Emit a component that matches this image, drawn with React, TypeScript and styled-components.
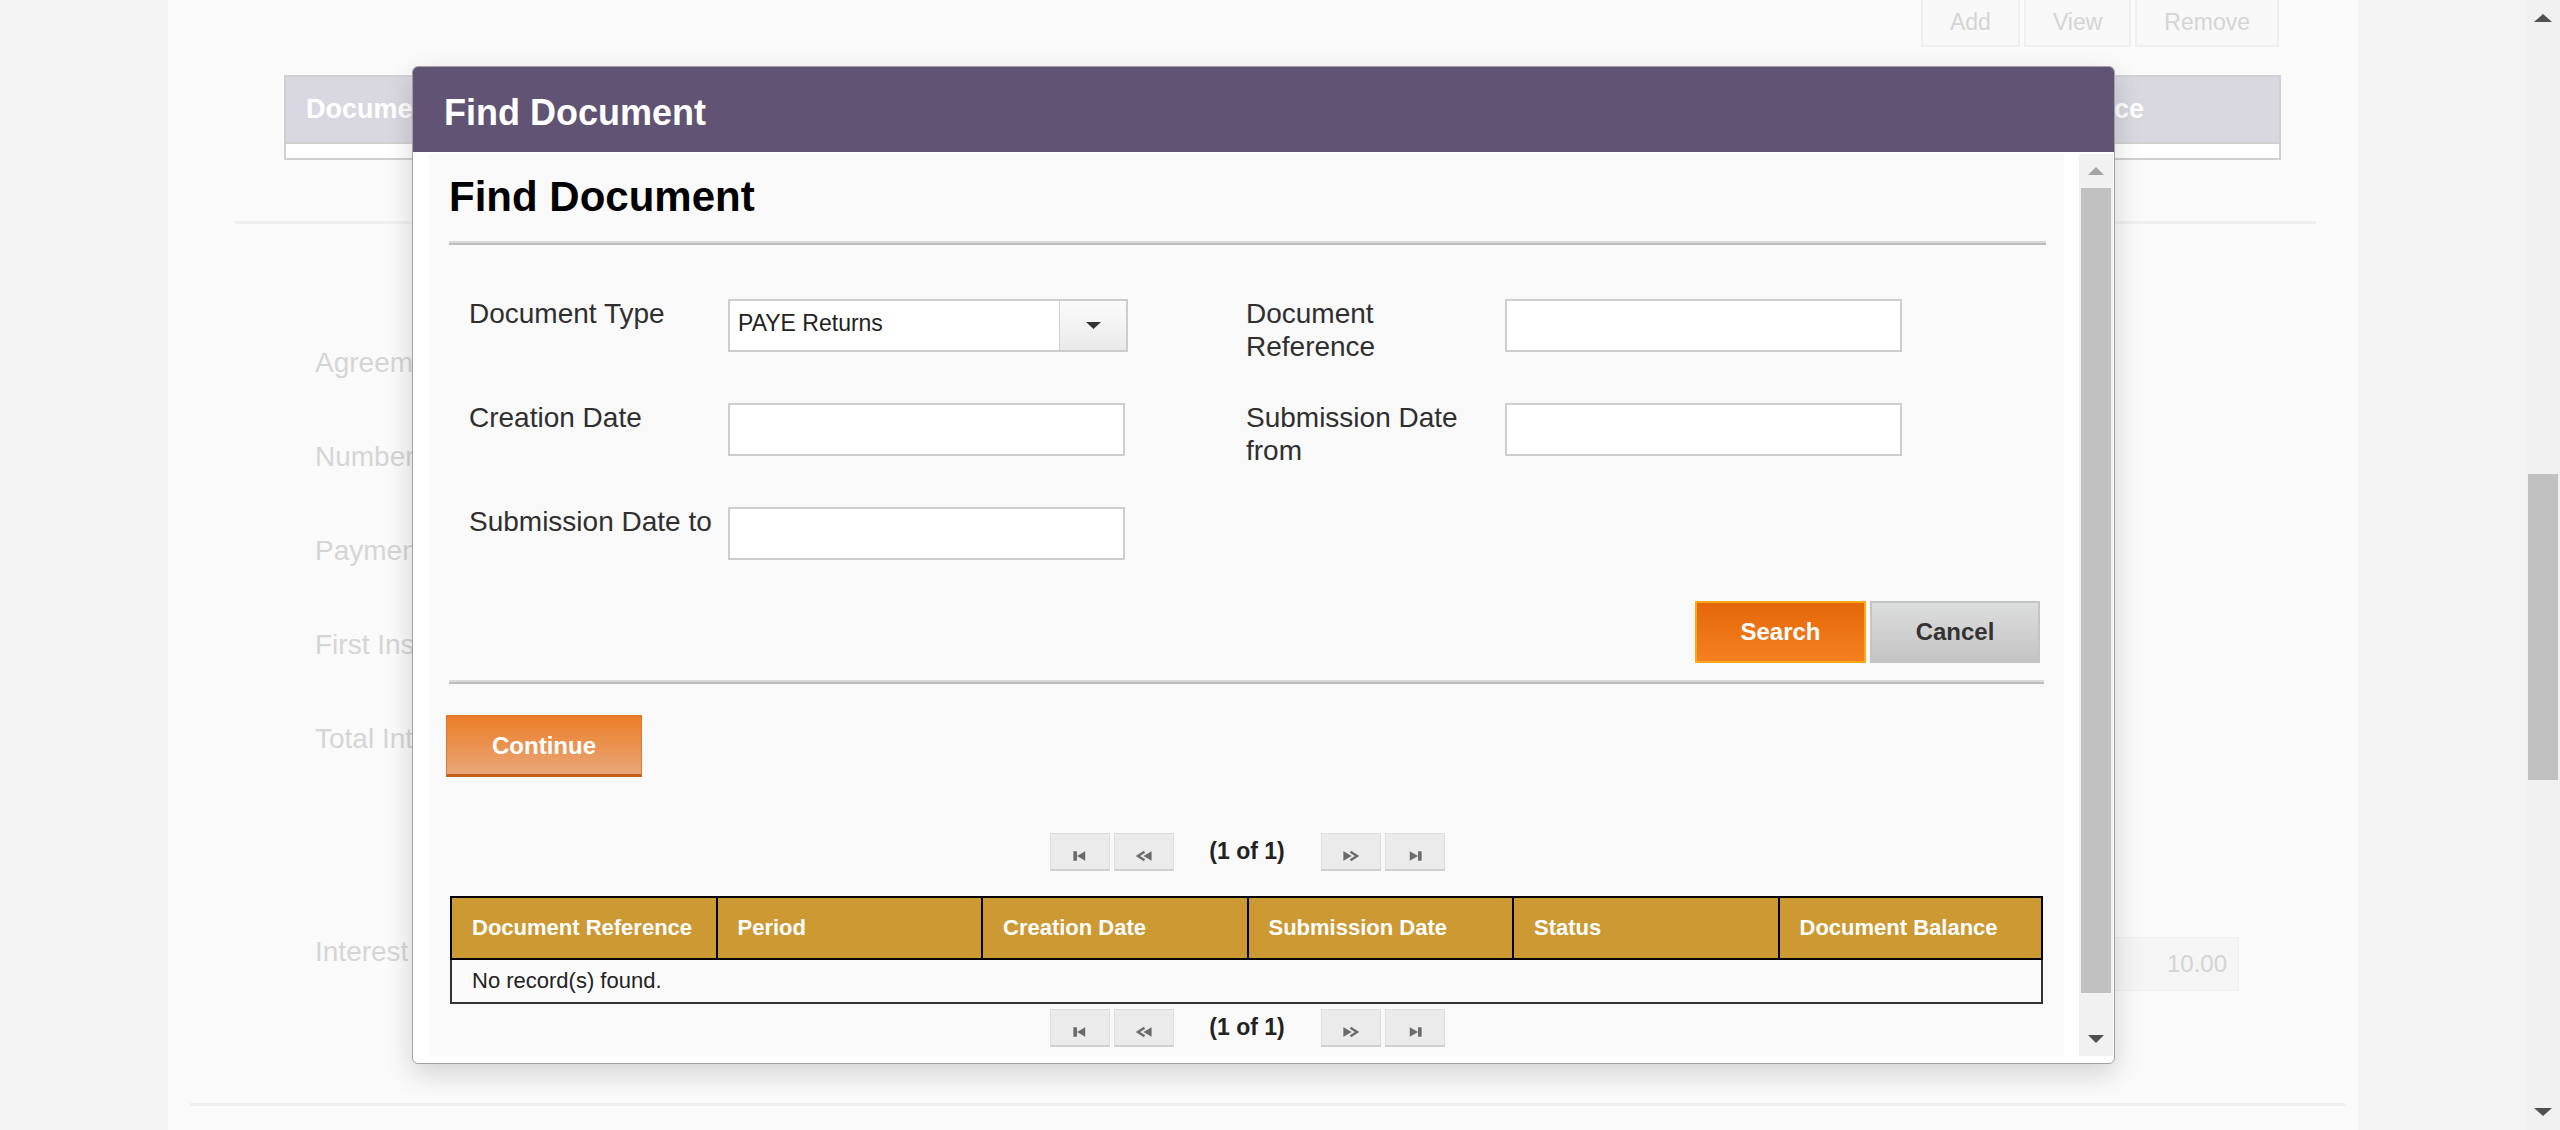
import React from "react";
import styled, { createGlobalStyle } from "styled-components";

const FONT = `"Liberation Sans", Arial, Helvetica, sans-serif`;

const GlobalStyle = createGlobalStyle`
  html, body { margin: 0; padding: 0; overflow: hidden; }
  body { font-family: ${FONT}; background: #f4f4f4; }
  * { box-sizing: border-box; }
`;

const Page = styled.div`
  position: relative;
  display: flex;
  width: 2560px;
  height: 1130px;
  overflow: hidden;
`;

const Gutter = styled.div`
  width: 168px;
  flex: none;
  background: #f4f4f4;
`;

const Main = styled.main`
  width: 2190px;
  flex: none;
  background: #fafafa;
  display: flex;
  flex-direction: column;
`;

/* ---------- faded page behind the dialog ---------- */

const Toolbar = styled.div`
  display: flex;
  justify-content: flex-end;
  gap: 4px;
  padding-right: 79px;
  height: 47px;
`;

const ToolButton = styled.div`
  height: 47px;
  padding: 0 27px;
  border: 2px solid #efefef;
  border-top: none;
  background: #f8f8f8;
  color: #d4d4d4;
  font-size: 23px;
  display: flex;
  align-items: center;
`;

const BgTable = styled.div`
  margin: 28px 77px 0 116px;
  border: 2px solid #d0d0d0;
  background: #fff;
`;

const BgHeader = styled.div`
  display: grid;
  grid-template-columns: repeat(5, 319px) 1fr;
  height: 67px;
  background: #d9d7df;
  border-bottom: 2px solid #d0d0d0;
`;

const BgHeaderCell = styled.div`
  display: flex;
  align-items: center;
  padding-left: 20px;
  color: #fff;
  font-weight: bold;
  font-size: 27px;
  white-space: nowrap;
  overflow: hidden;
`;

const BgRow = styled.div`
  height: 14px;
`;

const FaintRule = styled.div<{ $top: number; $left: number; $right: number }>`
  height: 3px;
  background: #efefef;
  margin: ${(p) => `${p.$top}px ${p.$right}px 0 ${p.$left}px`};
`;

const BgForm = styled.div`
  margin-top: 92px;
  display: flex;
  flex-direction: column;
`;

const BgFormRow = styled.div<{ $h: number }>`
  height: ${(p) => p.$h}px;
  display: flex;
  align-items: flex-start;
  padding: 0 119px 0 147px;
`;

const BgLabel = styled.div`
  font-size: 28px;
  line-height: 94px;
  color: #d5d5d5;
  white-space: nowrap;
`;

const BgValue = styled.div`
  margin-left: auto;
  margin-top: 32px;
  width: 250px;
  height: 54px;
  background: #f5f5f5;
  border: 1px solid #efefef;
  color: #d3d3d3;
  font-size: 24px;
  line-height: 52px;
  text-align: right;
  padding-right: 11px;
`;

/* ---------- scrollbars ---------- */

const ScrollBar = styled.div<{ $w: number }>`
  width: ${(p) => p.$w}px;
  flex: none;
  background: #f1f1f1;
  display: flex;
  flex-direction: column;
`;

const ScrollButton = styled.div<{ $h: number }>`
  height: ${(p) => p.$h}px;
  flex: none;
  display: flex;
  align-items: center;
  justify-content: center;
`;

const ScrollTrack = styled.div<{ $pad: number }>`
  flex: 1;
  padding-top: ${(p) => p.$pad}px;
`;

const ScrollThumb = styled.div<{ $h: number }>`
  height: ${(p) => p.$h}px;
  margin: 0 2px;
  background: #c1c1c1;
`;

const Arrow = ({ dir, color, w = 16, h = 8 }: { dir: "up" | "down"; color: string; w?: number; h?: number }) => (
  <svg width={w} height={h} viewBox={`0 0 ${w} ${h}`}>
    <polygon
      points={dir === "up" ? `0,${h} ${w / 2},0 ${w},${h}` : `0,0 ${w},0 ${w / 2},${h}`}
      fill={color}
    />
  </svg>
);

/* ---------- dialog ---------- */

const Modal = styled.section`
  position: absolute;
  left: 412px;
  top: 66px;
  width: 1703px;
  height: 998px;
  border: 1px solid #a2a2a2;
  border-radius: 6px;
  background: #fff;
  overflow: hidden;
  display: flex;
  flex-direction: column;
  box-shadow: 0 10px 28px rgba(0, 0, 0, 0.16);
`;

const TitleBar = styled.header`
  height: 85px;
  flex: none;
  background: #615374;
  color: #fff;
  font-weight: bold;
  font-size: 36px;
  line-height: 41px;
  display: flex;
  align-items: center;
  padding: 6px 0 0 31px;
`;

const ModalBody = styled.div`
  flex: 1;
  min-height: 0;
  display: flex;
  gap: 15px;
  padding: 2px 1px 7px 16px;
`;

const Pane = styled.div`
  flex: 1;
  min-width: 0;
  background: #f9f9f9;
  overflow: hidden;
  padding: 19px 18px 0 20px;
  display: flex;
  flex-direction: column;
`;

const Heading = styled.h2`
  margin: 0;
  font-size: 42px;
  line-height: 48px;
  font-weight: bold;
  color: #000;
`;

const Rule = styled.div<{ $top: number; $right?: number }>`
  height: 4px;
  flex: none;
  margin-top: ${(p) => p.$top}px;
  margin-right: ${(p) => p.$right ?? 0}px;
  background: linear-gradient(#d9d9d9 50%, #bdbdbd 50%);
`;

const FormGrid = styled.div`
  display: grid;
  grid-template-columns: 259px 518px 259px 397px;
  grid-auto-rows: 53px;
  row-gap: 51px;
  margin-top: 54px;
  padding-left: 20px;
  align-items: start;
`;

const Label = styled.label`
  font-size: 28px;
  line-height: 33px;
  color: #2f2f2f;
  margin-top: -2px;
  padding-right: 8px;
`;

const TextInput = styled.input`
  width: 397px;
  height: 53px;
  border: 2px solid #cdcdcd;
  background: #fff;
  outline: none;
  font-family: ${FONT};
  font-size: 23px;
  padding: 0 8px;
`;

const SelectBox = styled.div`
  width: 400px;
  height: 53px;
  border: 2px solid #cdcdcd;
  background: #fff;
  display: flex;
`;

const SelectValue = styled.div`
  flex: 1;
  padding-left: 8px;
  font-size: 23px;
  line-height: 45px;
  color: #222;
`;

const SelectTrigger = styled.div`
  width: 67px;
  border-left: 1px solid #d3d3d3;
  background: linear-gradient(#fbfbfb, #eaeaea);
  display: flex;
  align-items: center;
  justify-content: center;
`;

const ActionRow = styled.div`
  display: flex;
  justify-content: flex-end;
  gap: 4px;
  margin-top: 41px;
  padding-right: 6px;
`;

const ActionButton = styled.button<{ $primary?: boolean; $w: number }>`
  width: ${(p) => p.$w}px;
  height: 62px;
  font-family: ${FONT};
  font-weight: bold;
  font-size: 24px;
  cursor: pointer;
  border: 2px solid ${(p) => (p.$primary ? "#fba71b" : "#c4c4c4")};
  color: ${(p) => (p.$primary ? "#fff" : "#333")};
  background: ${(p) =>
    p.$primary ? "linear-gradient(#e4680a, #f58020)" : "linear-gradient(#dcdddd, #c5c4c4)"};
`;

const ContinueButton = styled.button`
  align-self: flex-start;
  margin: 31px 0 0 -3px;
  width: 196px;
  height: 62px;
  font-family: ${FONT};
  font-weight: bold;
  font-size: 24px;
  color: #fff;
  border: 1px solid #dc772e;
  border-bottom: 3px solid #bf5f18;
  background: linear-gradient(#ec7d27, #e9a778);
  padding-top: 2px;
`;

const Pager = styled.div<{ $top: number }>`
  display: flex;
  justify-content: center;
  align-items: center;
  margin-top: ${(p) => p.$top}px;
  height: 38px;
  flex: none;
`;

const PagerGroup = styled.div`
  display: flex;
  gap: 4px;
`;

const PagerButton = styled.div`
  width: 60px;
  height: 38px;
  background: #ebebeb;
  border: 1px solid #dedede;
  border-bottom: 2px solid #cfcfcf;
  display: flex;
  align-items: center;
  justify-content: center;
  padding-top: 8px;
`;

const PagerInfo = styled.div`
  padding: 0 36px 2px 35px;
  font-weight: bold;
  font-size: 23px;
  color: #222;
`;

const DataTable = styled.table`
  width: 1593px;
  margin: 25px 3px 0 1px;
  border-collapse: separate;
  border-spacing: 0;
  table-layout: fixed;
  flex: none;
`;

const Th = styled.th`
  height: 64px;
  padding: 0 0 0 20px;
  background: #cc9933;
  color: #fff;
  font-weight: bold;
  font-size: 22px;
  text-align: left;
  white-space: nowrap;
  border-top: 2px solid #000;
  border-bottom: 2px solid #000;
  border-left: 2px solid #000;
  &:last-child {
    border-right: 2px solid #000;
  }
`;

const Td = styled.td`
  height: 44px;
  padding: 0 0 0 20px;
  background: #fbfbfb;
  color: #222;
  font-size: 22px;
  border: 2px solid #333;
  border-top: none;
`;

const PagerIcon = ({ kind }: { kind: "first" | "prev" | "next" | "last" }) => {
  const c = "#6b6b6b";
  const shapes: Record<string, React.ReactNode> = {
    first: (
      <>
        <rect x="2" y="1" width="3" height="8" fill={c} />
        <polygon points="5,5 12,1 12,9" fill={c} />
      </>
    ),
    prev: (
      <>
        <polyline points="8,1.5 2.5,5 8,8.5" fill="none" stroke={c} strokeWidth="2" />
        <polygon points="7,5 14,1 14,9" fill={c} />
      </>
    ),
    next: (
      <>
        <polygon points="2,1 9,5 2,9" fill={c} />
        <polyline points="8,1.5 13.5,5 8,8.5" fill="none" stroke={c} strokeWidth="2" />
      </>
    ),
    last: (
      <>
        <polygon points="4,1 11,5 4,9" fill={c} />
        <rect x="11" y="1" width="3" height="8" fill={c} />
      </>
    ),
  };
  return (
    <svg width="19" height="12" viewBox="0 0 16 10">
      {shapes[kind]}
    </svg>
  );
};

const Paginator = ({ top }: { top: number }) => (
  <Pager $top={top}>
    <PagerGroup>
      <PagerButton>
        <PagerIcon kind="first" />
      </PagerButton>
      <PagerButton>
        <PagerIcon kind="prev" />
      </PagerButton>
    </PagerGroup>
    <PagerInfo>(1 of 1)</PagerInfo>
    <PagerGroup>
      <PagerButton>
        <PagerIcon kind="next" />
      </PagerButton>
      <PagerButton>
        <PagerIcon kind="last" />
      </PagerButton>
    </PagerGroup>
  </Pager>
);

const bgRows: { label: string; h: number }[] = [
  { label: "Agreement Date", h: 94 },
  { label: "Number of Installments", h: 94 },
  { label: "Payment Frequency", h: 94 },
  { label: "First Installment Date", h: 94 },
  { label: "Total Interest Amount", h: 213 },
];

const columns = [
  "Document Reference",
  "Period",
  "Creation Date",
  "Submission Date",
  "Status",
  "Document Balance",
];

export default function App() {
  return (
    <>
      <GlobalStyle />
      <Page>
        <Gutter />
        <Main>
          <Toolbar>
            <ToolButton>Add</ToolButton>
            <ToolButton>View</ToolButton>
            <ToolButton>Remove</ToolButton>
          </Toolbar>
          <BgTable>
            <BgHeader>
              {columns.map((c) => (
                <BgHeaderCell key={c}>{c}</BgHeaderCell>
              ))}
            </BgHeader>
            <BgRow />
          </BgTable>
          <FaintRule $top={61} $left={66} $right={42} />
          <BgForm>
            {bgRows.map((r) => (
              <BgFormRow key={r.label} $h={r.h}>
                <BgLabel>{r.label}</BgLabel>
              </BgFormRow>
            ))}
            <BgFormRow $h={94}>
              <BgLabel>Interest Amount</BgLabel>
              <BgValue>10.00</BgValue>
            </BgFormRow>
          </BgForm>
          <FaintRule $top={104} $left={22} $right={13} />
        </Main>
        <Gutter />
        <ScrollBar $w={34}>
          <ScrollButton $h={36}>
            <Arrow dir="up" color="#505050" w={18} h={8} />
          </ScrollButton>
          <ScrollTrack $pad={438}>
            <ScrollThumb $h={306} />
          </ScrollTrack>
          <ScrollButton $h={36}>
            <Arrow dir="down" color="#505050" w={18} h={8} />
          </ScrollButton>
        </ScrollBar>

        <Modal role="dialog" aria-label="Find Document">
          <TitleBar>Find Document</TitleBar>
          <ModalBody>
            <Pane>
              <Heading>Find Document</Heading>
              <Rule $top={20} />
              <FormGrid>
                <Label>Document Type</Label>
                <SelectBox>
                  <SelectValue>PAYE Returns</SelectValue>
                  <SelectTrigger>
                    <Arrow dir="down" color="#333" w={15} h={7} />
                  </SelectTrigger>
                </SelectBox>
                <Label>Document Reference</Label>
                <TextInput type="text" />

                <Label>Creation Date</Label>
                <TextInput type="text" />
                <Label>Submission Date from</Label>
                <TextInput type="text" />

                <Label>Submission Date to</Label>
                <TextInput type="text" />
              </FormGrid>
              <ActionRow>
                <ActionButton $primary $w={171}>
                  Search
                </ActionButton>
                <ActionButton $w={170}>Cancel</ActionButton>
              </ActionRow>
              <Rule $top={17} $right={2} />
              <ContinueButton>Continue</ContinueButton>
              <Paginator top={56} />
              <DataTable>
                <thead>
                  <tr>
                    {columns.map((c) => (
                      <Th key={c}>{c}</Th>
                    ))}
                  </tr>
                </thead>
                <tbody>
                  <tr>
                    <Td colSpan={6}>No record(s) found.</Td>
                  </tr>
                </tbody>
              </DataTable>
              <Paginator top={5} />
            </Pane>
            <ScrollBar $w={34}>
              <ScrollButton $h={34}>
                <Arrow dir="up" color="#a3a3a3" />
              </ScrollButton>
              <ScrollTrack $pad={0}>
                <ScrollThumb $h={805} />
              </ScrollTrack>
              <ScrollButton $h={34}>
                <Arrow dir="down" color="#505050" />
              </ScrollButton>
            </ScrollBar>
          </ModalBody>
        </Modal>
      </Page>
    </>
  );
}
